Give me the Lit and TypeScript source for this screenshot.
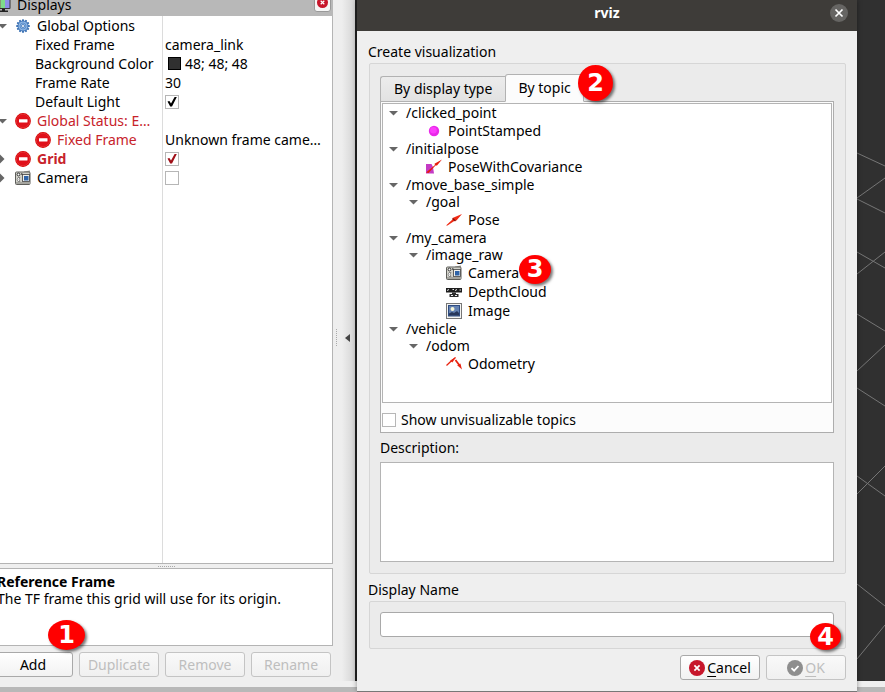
import { LitElement, html, svg, css, nothing, type TemplateResult } from "lit";
import { customElement, state } from "lit/decorators.js";
import { classMap } from "lit/directives/class-map.js";

const gearTeeth = [0, 30, 60, 90, 120, 150, 180, 210, 240, 270, 300, 330];

const icon = (body: TemplateResult, cls = "") =>
  html`<svg class="icon ${cls}" viewBox="0 0 16 16" aria-hidden="true">${body}</svg>`;

const icons: Record<string, () => TemplateResult> = {
  monitor: () => icon(svg`
    <rect x="0" y="1" width="15.5" height="11" rx="1" fill="#333"/>
    <rect x="1" y="2" width="4.5" height="9" fill="#e58a8a"/>
    <rect x="5.5" y="2" width="4.5" height="9" fill="#7fdc8a"/>
    <rect x="10" y="2" width="4.5" height="9" fill="#8f8fe8"/>
    <path d="M7 12h3v1.500h3v1.500H4v-1.500h3z" fill="#222"/>`),
  gear: () => icon(svg`
    ${gearTeeth.map((a) => svg`<rect x="7" y="1.200" width="2" height="3" rx=".6" fill="#3f74b5" transform="rotate(${a} 8 8)"/>`)}
    <circle cx="8" cy="8" r="5" fill="#8fb8e6" stroke="#3f74b5" stroke-width=".9"/>
    <circle cx="8" cy="8" r="3" fill="none" stroke="#5c8dca" stroke-width=".9"/>
    <circle cx="8" cy="8" r="1.500" fill="#fff" stroke="#3f74b5" stroke-width=".8"/>`),
  stop: () => icon(svg`
    <circle cx="8" cy="8" r="7.900" fill="#d40000"/>
    <circle cx="8" cy="8" r="6.800" fill="#e0101a" stroke="#ee5555" stroke-width=".5"/>
    <rect x="4" y="6.200" width="8.500" height="3.200" rx=".3" fill="#fff"/>`),
  camera: () => icon(svg`
    <path d="M9 1.500l6-1v3H9z" fill="#9a9a94"/>
    <rect x=".5" y="2" width="14.500" height="12.500" rx="1" fill="#d2d2ca" stroke="#5e5e5a"/>
    <path d="M1 12h14v2H1z" fill="#a5a59f"/>
    <circle cx="3.500" cy="4.500" r="1.400" fill="#fff" stroke="#222" stroke-width=".9"/>
    <circle cx="6.800" cy="4" r=".8" fill="#222"/>
    <path d="M3 7.500h2l-1 2 1 2H3l-.8-2z" fill="#fff" stroke="#555" stroke-width=".6"/>
    <rect x="7.500" y="4.500" width="7" height="7" fill="#f0f0ec" stroke="#444" stroke-width=".8"/>
    <rect x="9" y="6" width="4.500" height="4.500" fill="#2f64a8"/>`),
  point: () => icon(svg`
    <circle cx="8" cy="8" r="5.200" fill="#e828e8"/>
    <circle cx="7.400" cy="7.200" r="3.300" fill="#fb3cfb"/>`),
  poseCov: () => icon(svg`
    <path d="M0 5h5.500l1.500 3 1 6.500H0z" fill="#c43ac4"/>
    <path d="M0 13.500L9 6l-.5-1.200L16 .6l-5 6-1.500-.2L2.500 14z" fill="#e61c0c"/>`),
  pose: () => icon(svg`
    <path d="M0 13.500L7 7l-.5-1L16 2l-5.500 6.500-1.500 0-7.500 5z" fill="#ee2a14"/>
    <path d="M6.500 6.500l3 2.500" stroke="#8a1008" stroke-width="1.600"/>`),
  depth: () => icon(svg`
    <path d="M0 4h16v4.500H0z" fill="#1d1d1d"/>
    <path d="M6 8.500h4v1.500h2.500V13h-9v-3H6z" fill="#2c2c2c"/>
    <path d="M1 6.500l2-1M6.500 5.500h1.500M9 6.500l2-1M13.500 6h1.500M5 11.500h2M9 11.500h2" stroke="#fff" stroke-width=".9"/>`),
  image: () => icon(svg`
    <rect x=".5" y=".5" width="15" height="15" fill="#f4f4f2" stroke="#777"/>
    <rect x="2.500" y="2.500" width="11" height="10.500" fill="#6482b2" stroke="#2f4c80"/>
    <circle cx="6.500" cy="6" r="2" fill="#f7f6d8"/>
    <path d="M3 12.500v-2l3-1.500 2 1 3-2 2 2v2.500z" fill="#27375a"/>`),
  odometry: () => icon(svg`
    <path d="M.5 9.500L5.500 4.800M4.500 5.800L9.500 1.500" stroke="#e8220f" stroke-width="1.300"/>
    <path d="M4.200 4.600L9.800 1.200 6.400 6.600z" fill="#e8220f"/>
    <path d="M9.500 4l4.500 6" stroke="#e8220f" stroke-width="1.800"/>
    <path d="M11.200 9.200L14.400 7.400 16 13.500z" fill="#e8220f"/>`),
  cancel: () => icon(svg`
    <circle cx="8" cy="8" r="8" fill="#c7162b"/>
    <path d="M5.400 5.400l5.200 5.200M10.600 5.400l-5.200 5.200" stroke="#fff" stroke-width="1.700"/>`),
  accept: () => icon(svg`
    <circle cx="8" cy="8" r="8" fill="#8e8e8e"/>
    <path d="M4.500 8.200l2.600 2.500 4.400-4.700" fill="none" stroke="#fff" stroke-width="1.800"/>`),
};

interface Property {
  name: string;
  icon?: string;
  child?: boolean;
  arrow?: "open" | "closed";
  tone?: "error" | "error-bold";
  text?: string;
  swatch?: boolean;
  checked?: boolean;
}

const properties: Property[] = [
  { name: "Global Options", icon: "gear", arrow: "open" },
  { name: "Fixed Frame", child: true, text: "camera_link" },
  { name: "Background Color", child: true, text: "48; 48; 48", swatch: true },
  { name: "Frame Rate", child: true, text: "30" },
  { name: "Default Light", child: true, checked: true },
  { name: "Global Status: E…", icon: "stop", arrow: "open", tone: "error" },
  { name: "Fixed Frame", icon: "stop", child: true, tone: "error", text: "Unknown frame came…" },
  { name: "Grid", icon: "stop", arrow: "closed", tone: "error-bold", checked: true },
  { name: "Camera", icon: "camera", arrow: "closed", checked: false },
];

interface Topic {
  name: string;
  icon?: string;
  badge?: string;
  children?: Topic[];
}

const topics: Topic[] = [
  { name: "/clicked_point", children: [{ name: "PointStamped", icon: "point" }] },
  { name: "/initialpose", children: [{ name: "PoseWithCovariance", icon: "poseCov" }] },
  { name: "/move_base_simple", children: [{ name: "/goal", children: [{ name: "Pose", icon: "pose" }] }] },
  {
    name: "/my_camera",
    children: [
      {
        name: "/image_raw",
        children: [
          { name: "Camera", icon: "camera", badge: "3" },
          { name: "DepthCloud", icon: "depth" },
          { name: "Image", icon: "image" },
        ],
      },
    ],
  },
  { name: "/vehicle", children: [{ name: "/odom", children: [{ name: "Odometry", icon: "odometry" }] }] },
];

@customElement("app-root")
export class AppRoot extends LitElement {
  @state() private tab = "topic";

  static styles = css`
    :host {
      display: block;
      font: 14px/18px "Noto Sans", "Open Sans", sans-serif;
      color: #000;
    }
    * { box-sizing: border-box; }
    button, input, textarea { font: inherit; color: inherit; margin: 0; }

    .desktop {
      display: grid;
      grid-template-columns: 333px 22px minmax(0, 1fr);
      grid-template-rows: minmax(0, 1fr) 6px 5px;
      height: 100vh;
      min-height: 600px;
      background: #efefef;
      overflow: hidden;
    }
    .icon { flex: none; width: 16px; height: 16px; display: block; }

    /* dock */
    .dock { grid-area: 1 / 1; display: flex; flex-direction: column; min-height: 0; }
    .dock-head {
      flex: none;
      height: 16px;
      display: flex;
      align-items: flex-end;
      background: #b8b8b8;
      overflow: hidden;
      padding-right: 2px;
    }
    .dock-head > .icon { margin: 0 6px 3px -5px; }
    .dock-title { flex: 1; line-height: 22px; }
    .dock-close {
      width: 17px;
      height: 22px;
      margin-bottom: 4px;
      padding: 0 0 3px;
      display: flex;
      align-items: flex-end;
      justify-content: center;
      border: 1px solid #999;
      border-radius: 3px;
      background: #f6f6f6;
    }
    .dock-close .icon { width: 11px; height: 11px; }
    .props {
      flex: 1;
      min-height: 0;
      background: linear-gradient(90deg, #fff 162px, #dcdcdc 162px, #dcdcdc 163px, #fff 163px);
      border-right: 1px solid #b4b4b4;
      border-bottom: 1px solid #b4b4b4;
    }
    table { width: 100%; border-collapse: collapse; table-layout: fixed; }
    .name-col { width: 163px; }
    th, td { height: 19px; padding: 0; font-weight: 400; text-align: left; white-space: nowrap; overflow: hidden; }
    td { padding-left: 2px; }
    .cell { display: flex; align-items: center; height: 19px; }
    .cell .icon { margin-right: 6px; }
    .cell.child { padding-left: 35px; }
    .error { color: #c7232b; }
    .error-bold { color: #c7232b; font-weight: 700; }
    .twig { flex: none; width: 15px; height: 10px; display: block; fill: #666; }
    .swatch { width: 13px; height: 13px; margin: 0 4px 0 3px; background: #303030; border: 1px solid #000; }

    .check {
      appearance: none;
      flex: none;
      width: 14px;
      height: 14px;
      display: grid;
      place-items: center;
      background: #fff;
      border: 1px solid #b6b6b6;
    }
    .check:checked::before {
      content: "";
      width: 10px;
      height: 10px;
      background: #000;
      clip-path: polygon(5% 50%, 24% 45%, 40% 70%, 76% 5%, 98% 5%, 50% 100%, 32% 100%);
    }
    .check.red::before { background: #a01018; }

    .grip { flex: none; height: 4px; display: grid; place-items: center; }
    .grip::before { content: ""; width: 17px; border-top: 1px dotted #aaa; }
    .help {
      flex: none;
      height: 78px;
      padding: 4px 0;
      margin-bottom: 6px;
      background: #fff;
      border: 1px solid #b4b4b4;
      border-left: 0;
      white-space: nowrap;
      overflow: hidden;
    }
    .help p { margin: 0 0 0 -3px; line-height: 17px; }
    .help p:first-child { font-weight: 700; }
    .dock-buttons {
      flex: none;
      display: grid;
      grid-template-columns: repeat(4, 1fr);
      gap: 6px;
      margin: 0 2px 4px -7px;
    }
    .btn {
      position: relative;
      height: 25px;
      padding: 0;
      display: flex;
      align-items: center;
      justify-content: center;
      border: 1px solid #a9a9a9;
      border-radius: 3px;
      background: linear-gradient(#fff, #f2f2f2);
      white-space: nowrap;
    }
    .btn:disabled { color: #bebebe; border-color: #c4c4c4; background: linear-gradient(#f9f9f9, #f0f0f0); }
    .btn u { text-underline-offset: 3px; }

    .splitter {
      grid-area: 1 / 2;
      display: flex;
      align-items: center;
      gap: 8px;
      padding: 0 0 6px 3px;
      background: linear-gradient(90deg, #eee 40%, #d4d4d4);
    }
    .splitter::before { content: ""; height: 17px; border-left: 1px dotted #aaa; }
    .splitter svg { width: 5px; height: 8px; fill: #444; }

    .viewport {
      grid-area: 1 / 3;
      display: flex;
      justify-content: flex-end;
      background: #303030;
      border-left: 2px solid #222;
      overflow: hidden;
    }
    .viewport svg { flex: none; width: 28px; height: 681px; stroke: #767676; fill: none; }
    .status { grid-area: 3 / 1 / 4 / -1; background: #b8b8b8; }

    /* dialog */
    .dialog {
      grid-area: 1 / 3 / -1 / 4;
      margin: 0 28px 1px 2px;
      display: flex;
      flex-direction: column;
      background: #efefef;
      box-shadow: 0 1px 0 #777, 0 0 5px #0006;
      min-height: 0;
    }
    .titlebar {
      flex: none;
      display: grid;
      grid-template-columns: 1fr auto 1fr;
      height: 31px;
      padding: 0 9px 5px;
      align-items: center;
      background: #3e3c39;
      color: #fff;
    }
    .titlebar h1 { grid-column: 2; margin: 0; font-size: 14px; line-height: 26px; }
    .titlebar button { justify-self: end; padding: 0; border: 0; background: none; }
    .titlebar svg { display: block; width: 18px; height: 18px; }
    .body { flex: 1; min-height: 0; display: flex; flex-direction: column; padding: 11px; }
    .caption { line-height: 20px; display: block; }
    .group {
      margin: 1px 0 6px 1px;
      padding: 10px 11px 11px 10px;
      background: #ebebeb;
      border: 1px solid #d6d6d6;
      border-radius: 2px;
    }
    .group.main { flex: 1; min-height: 0; display: flex; flex-direction: column; }
    .tabs { position: relative; flex: none; display: flex; align-items: flex-end; height: 28px; margin-bottom: -1px; }
    .tab {
      height: 26px;
      padding: 0 13px;
      border: 1px solid #b2b2b2;
      border-right: 0;
      border-radius: 3px 0 0 0;
      background: linear-gradient(#ececec, #e2e2e2);
    }
    .tab.on {
      height: 28px;
      padding: 0 12px;
      border-right: 1px solid #b2b2b2;
      border-bottom-color: #fcfcfc;
      border-radius: 3px 3px 0 0;
      background: #fcfcfc;
    }
    .pane {
      flex: 1;
      min-height: 0;
      display: flex;
      flex-direction: column;
      padding: 1px 1px 0;
      background: #fcfcfc;
      border: 1px solid #adadad;
    }
    .tree, .tree ul { list-style: none; margin: 0; padding: 0; }
    .tree { flex: 1; min-height: 0; background: #fff; border: 1px solid #b4b4b4; padding-left: 3px; }
    .tree ul { padding-left: 20px; }
    .row { display: flex; align-items: center; height: 17px; }
    .row .twig { width: 20px; padding-right: 5px; }
    .row.leaf { height: 19px; padding-left: 20px; }
    .row.leaf .icon { margin-right: 6px; }
    .leaf-name { position: relative; }
    .option { flex: none; display: flex; align-items: center; gap: 5px; height: 29px; padding-top: 5px; }
    .desc-label { line-height: 29px; }
    textarea {
      flex: none;
      display: block;
      width: 100%;
      height: 100px;
      resize: none;
      background: #fff;
      border: 1px solid #b4b4b4;
      outline: none;
    }
    .field {
      display: block;
      width: 100%;
      height: 25px;
      border: 1px solid #a9a9a9;
      border-radius: 3px;
      background: #fff;
      outline: none;
    }
    .actions { flex: none; display: flex; justify-content: flex-end; gap: 6px; }
    .actions .btn { width: 80px; gap: 2px; }

    /* numbered callouts */
    .badge {
      position: absolute;
      z-index: 1;
      display: grid;
      place-items: center;
      border-radius: 50%;
      background: #f00;
      color: #fff;
      font: 700 24px/28px "DejaVu Sans", sans-serif;
      box-shadow: 2px 2px 3px #0008;
    }
    .b1 { left: 54px; top: -33px; width: 37px; height: 30px; }
    .b2 { left: 198px; top: -9px; width: 35px; height: 36px; }
    .b3 { left: 51px; top: -9px; width: 32px; height: 29px; }
    .b4 { left: 43px; top: -33px; width: 31px; height: 27px; }
  `;

  private twig(kind?: "open" | "closed", offset = 0) {
    return html`<svg class="twig" viewBox="${-offset} 0 15 10" aria-hidden="true">
      ${kind === "open" ? svg`<path d="M-2 3h9L2.500 7.500z"/>` : kind === "closed" ? svg`<path d="M0 .5v9L4.500 5z"/>` : nothing}
    </svg>`;
  }

  private property(p: Property) {
    const tone = p.tone ?? "";
    return html`<tr>
      <th scope="row" class=${tone}>
        <div class="cell ${p.child ? "child" : ""}">
          ${p.child ? nothing : this.twig(p.arrow)}
          ${p.icon ? icons[p.icon]() : nothing}<span>${p.name}</span>
        </div>
      </th>
      <td>
        <div class="cell">
          ${p.swatch ? html`<span class="swatch"></span>` : nothing}
          ${p.checked !== undefined
            ? html`<input type="checkbox" aria-label=${p.name}
                class=${classMap({ check: true, red: p.tone !== undefined })} ?checked=${p.checked}>`
            : p.text}
        </div>
      </td>
    </tr>`;
  }

  private topic(t: Topic): TemplateResult {
    return html`<li>
      ${t.children
        ? html`<div class="row">${this.twig("open", 5)}<span>${t.name}</span></div>
            <ul>${t.children.map((c) => this.topic(c))}</ul>`
        : html`<div class="row leaf">${icons[t.icon!]()}<span class="leaf-name">${t.name}${t.badge
            ? html`<span class="badge b3">${t.badge}</span>` : nothing}</span></div>`}
    </li>`;
  }

  render() {
    return html`<div class="desktop">
      <section class="dock">
        <header class="dock-head">
          ${icons.monitor()}
          <span class="dock-title">Displays</span>
          <button class="dock-close" aria-label="Close panel">${icons.cancel()}</button>
        </header>
        <div class="props">
          <table>
            <colgroup><col class="name-col"><col></colgroup>
            <tbody>${properties.map((p) => this.property(p))}</tbody>
          </table>
        </div>
        <div class="grip"></div>
        <div class="help">
          <p>Reference Frame</p>
          <p>The TF frame this grid will use for its origin.</p>
        </div>
        <div class="dock-buttons">
          <button class="btn">Add<span class="badge b1">1</span></button>
          <button class="btn" disabled>Duplicate</button>
          <button class="btn" disabled>Remove</button>
          <button class="btn" disabled>Rename</button>
        </div>
      </section>
      <div class="splitter"><svg viewBox="0 0 5 8" aria-hidden="true"><path d="M5 0v8L0 4z"/></svg></div>
      <div class="viewport">
        <svg viewBox="0 0 28 681" aria-hidden="true">
          <path d="M0 153l28 13M0 198l28-20M0 199l28 14M0 252l28 16M0 274l28-22M0 314l28 17M0 371l28-26M0 388l28 18M0 476l28 20M0 494l28-28M0 584l28 22M0 659l28-34"/>
        </svg>
      </div>
      <div class="status"></div>

      <section class="dialog" role="dialog" aria-labelledby="title">
        <header class="titlebar">
          <h1 id="title">rviz</h1>
          <button aria-label="Close">
            <svg viewBox="0 0 18 18"><circle cx="9" cy="9" r="9" fill="#666563"/>
              <path d="M5.500 5.500l7 7M12.500 5.500l-7 7" stroke="#fff" stroke-width="1.700"/></svg>
          </button>
        </header>
        <div class="body">
          <span class="caption">Create visualization</span>
          <div class="group main">
            <div class="tabs" role="tablist">
              ${[["type", "By display type"], ["topic", "By topic"]].map(([id, label]) => html`
                <button role="tab" aria-selected=${this.tab === id}
                  class=${classMap({ tab: true, on: this.tab === id })}
                  @click=${() => (this.tab = id)}>${label}</button>`)}
              <span class="badge b2">2</span>
            </div>
            <div class="pane" role="tabpanel">
              <ul class="tree">${topics.map((t) => this.topic(t))}</ul>
              <label class="option"><input class="check" type="checkbox">Show unvisualizable topics</label>
            </div>
            <label class="desc-label" for="desc">Description:</label>
            <textarea id="desc" readonly></textarea>
          </div>
          <label class="caption" for="name">Display Name</label>
          <div class="group"><input class="field" id="name" type="text"></div>
          <div class="actions">
            <button class="btn">${icons.cancel()}<span><u>C</u>ancel</span></button>
            <button class="btn" disabled>${icons.accept()}<span><u>O</u>K</span><span class="badge b4">4</span></button>
          </div>
        </div>
      </section>
    </div>`;
  }
}
